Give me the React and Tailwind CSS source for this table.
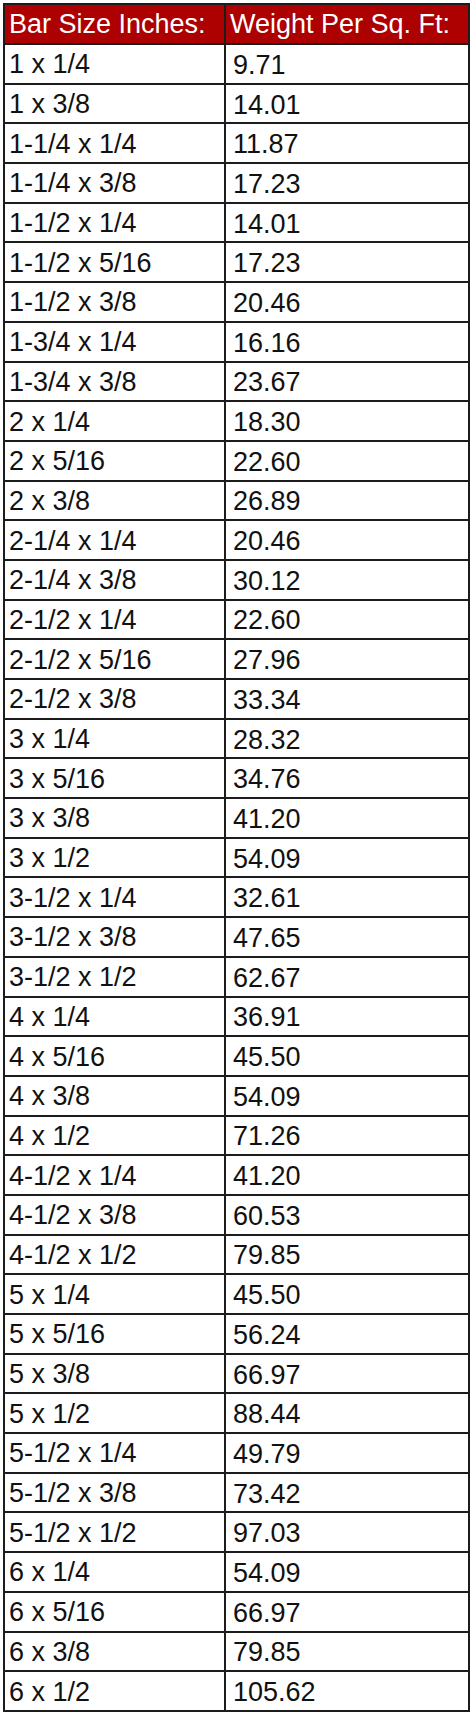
import React from "react";

const rows = [
  ["1 x 1/4", "9.71"],
  ["1 x 3/8", "14.01"],
  ["1-1/4 x 1/4", "11.87"],
  ["1-1/4 x 3/8", "17.23"],
  ["1-1/2 x 1/4", "14.01"],
  ["1-1/2 x 5/16", "17.23"],
  ["1-1/2 x 3/8", "20.46"],
  ["1-3/4 x 1/4", "16.16"],
  ["1-3/4 x 3/8", "23.67"],
  ["2 x 1/4", "18.30"],
  ["2 x 5/16", "22.60"],
  ["2 x 3/8", "26.89"],
  ["2-1/4 x 1/4", "20.46"],
  ["2-1/4 x 3/8", "30.12"],
  ["2-1/2 x 1/4", "22.60"],
  ["2-1/2 x 5/16", "27.96"],
  ["2-1/2 x 3/8", "33.34"],
  ["3 x 1/4", "28.32"],
  ["3 x 5/16", "34.76"],
  ["3 x 3/8", "41.20"],
  ["3 x 1/2", "54.09"],
  ["3-1/2 x 1/4", "32.61"],
  ["3-1/2 x 3/8", "47.65"],
  ["3-1/2 x 1/2", "62.67"],
  ["4 x 1/4", "36.91"],
  ["4 x 5/16", "45.50"],
  ["4 x 3/8", "54.09"],
  ["4 x 1/2", "71.26"],
  ["4-1/2 x 1/4", "41.20"],
  ["4-1/2 x 3/8", "60.53"],
  ["4-1/2 x 1/2", "79.85"],
  ["5 x 1/4", "45.50"],
  ["5 x 5/16", "56.24"],
  ["5 x 3/8", "66.97"],
  ["5 x 1/2", "88.44"],
  ["5-1/2 x 1/4", "49.79"],
  ["5-1/2 x 3/8", "73.42"],
  ["5-1/2 x 1/2", "97.03"],
  ["6 x 1/4", "54.09"],
  ["6 x 5/16", "66.97"],
  ["6 x 3/8", "79.85"],
  ["6 x 1/2", "105.62"],
];

export default function App() {
  return (
    <div className="w-[474px] h-[1719px] bg-white pt-[3px] pl-[3px] font-['Liberation_Sans',Arial,sans-serif]">
      <table className="w-[467px] border-collapse border-2 border-[#1c1c1c] text-[27px] leading-none text-[#111]">
        <thead>
          <tr className="h-[40px] bg-[#ad0000] text-white">
            <th className="w-[221px] border-2 border-[#1c1c1c] pl-[4px] pt-[1px] text-left font-normal align-middle whitespace-nowrap">
              Bar Size Inches:
            </th>
            <th className="border-2 border-[#1c1c1c] pl-[4px] pt-[1px] text-left font-normal align-middle whitespace-nowrap">
              Weight Per Sq. Ft:
            </th>
          </tr>
        </thead>
        <tbody>
          {rows.map(([size, weight]) => (
            <tr key={size} className="h-[39.7px]">
              <td className="border-2 border-[#1c1c1c] pl-[4px] pt-[2px] align-middle">{size}</td>
              <td className="border-2 border-[#1c1c1c] pl-[7px] pt-[3px] align-middle">{weight}</td>
            </tr>
          ))}
        </tbody>
      </table>
    </div>
  );
}
